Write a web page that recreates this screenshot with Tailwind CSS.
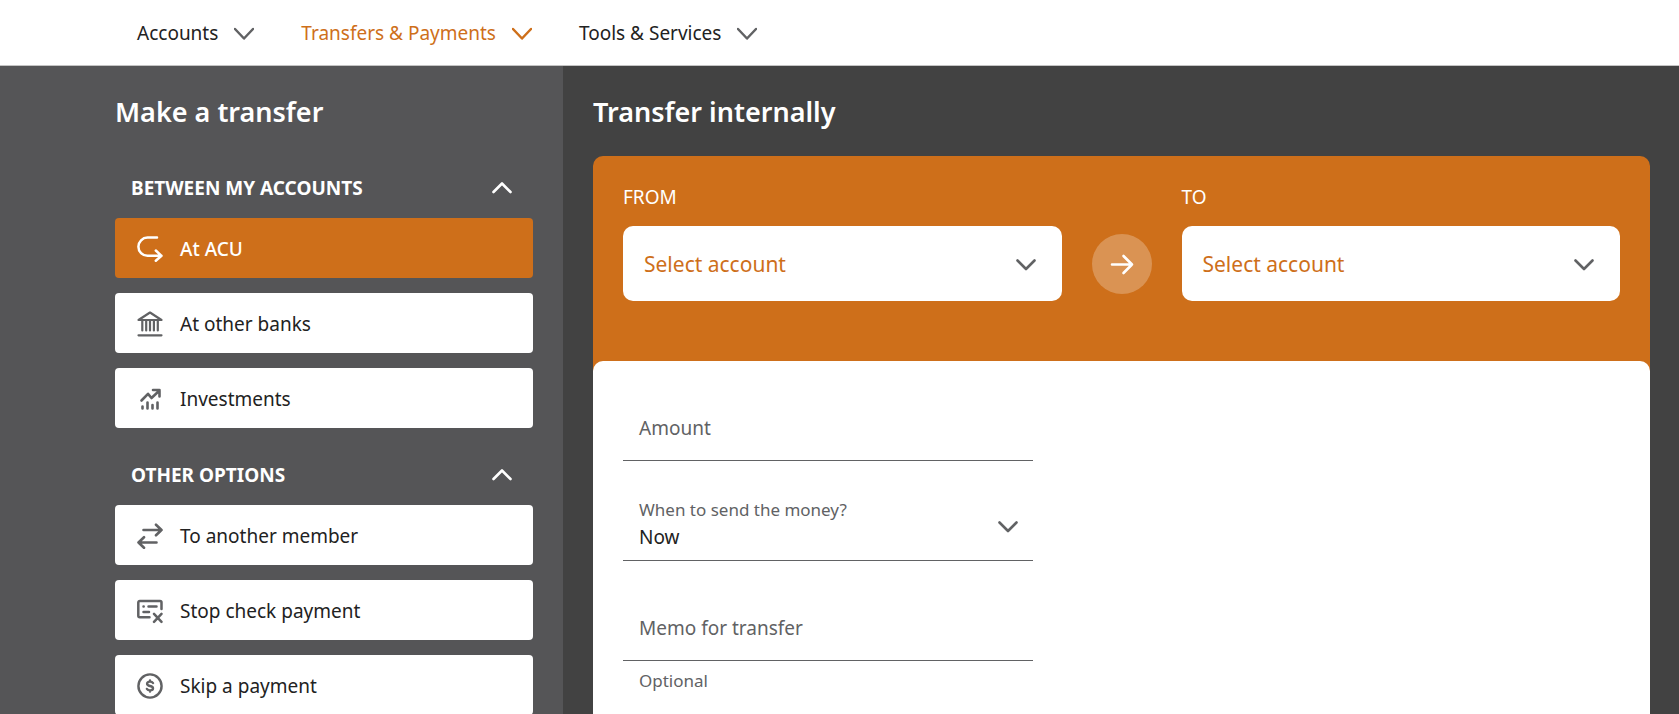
<!DOCTYPE html>
<html lang="en">
<head>
    <meta charset="UTF-8">
    <meta name="viewport" content="width=device-width, initial-scale=1.0">
    <title>Transfer internally</title>
    <script src="https://cdn.jsdelivr.net/npm/@tailwindcss/browser@4"></script>
</head>
<body class="flex h-screen flex-col overflow-hidden bg-[#424242] font-['Noto_Sans',sans-serif] text-[19px] text-[#222222]">
    <!-- Top navigation -->
    <header class="shrink-0 border-b border-[#c4c4c4] bg-white">
        <nav class="flex h-[65px] items-center gap-[47px] pt-0.5 pl-[137px]">
            <button type="button" class="flex items-center gap-4">
                Accounts
                <svg class="h-5 w-5 text-[#616264]" viewBox="0 0 20 20" fill="none" stroke="currentColor" stroke-width="2.5" stroke-linecap="round" stroke-linejoin="round"><path d="M1 5l9 9.500 9-9.500"/></svg>
            </button>
            <button type="button" class="flex items-center gap-4 text-[#ce6f1a]">
                Transfers &amp; Payments
                <svg class="h-5 w-5" viewBox="0 0 20 20" fill="none" stroke="currentColor" stroke-width="2.5" stroke-linecap="round" stroke-linejoin="round"><path d="M1 5l9 9.500 9-9.500"/></svg>
            </button>
            <button type="button" class="flex items-center gap-4">
                Tools &amp; Services
                <svg class="h-5 w-5 text-[#616264]" viewBox="0 0 20 20" fill="none" stroke="currentColor" stroke-width="2.5" stroke-linecap="round" stroke-linejoin="round"><path d="M1 5l9 9.500 9-9.500"/></svg>
            </button>
        </nav>
    </header>

    <div class="flex min-h-0 flex-1">
        <!-- Sidebar -->
        <aside class="w-[563px] shrink-0 overflow-hidden bg-[#555557] pt-[26px] pr-[30px] pl-[115px]">
            <h2 class="mb-[26px] text-[27px] leading-10 font-semibold text-white">Make a transfer</h2>

            <section class="mb-[17px]">
                <button type="button" class="flex h-[60px] w-full items-center justify-between pr-[21px] pl-4 font-bold text-white">
                    BETWEEN MY ACCOUNTS
                    <svg class="h-5 w-5" viewBox="0 0 20 20" fill="none" stroke="currentColor" stroke-width="2.6" stroke-linecap="round" stroke-linejoin="round"><path d="M1.5 14L10 5.5l8.5 8.5"/></svg>
                </button>
                <ul class="flex flex-col gap-[15px]">
                    <li>
                        <a href="#" class="flex h-[60px] items-center gap-[17px] rounded bg-[#ce6f1a] px-[22px] pt-0.5 font-medium text-white">
                            <svg class="h-[26px] w-[26px]" viewBox="0 0 26 26" fill="none" stroke="currentColor" stroke-width="2.5" stroke-linecap="round" stroke-linejoin="round"><path d="M20 1.600H10.500a9.100 9.100 0 0 0 0 18.200H24.500M18.800 14.500l5.700 5.300-5.700 5"/></svg>
                            At ACU
                        </a>
                    </li>
                    <li>
                        <a href="#" class="flex h-[60px] items-center gap-[17px] rounded bg-white px-[22px] pt-0.5">
                            <svg class="h-[26px] w-[26px] text-[#616264]" viewBox="0 0 26 26" fill="none" stroke="currentColor" stroke-width="2.2" stroke-linecap="round" stroke-linejoin="round"><path d="M1.500 9L13 1.500l11.500 7.500zM5.300 10v9.500M9.200 10v9.500M13 10v9.500M16.900 10v9.500M20.800 10v9.500M1.500 24.300h23"/></svg>
                            At other banks
                        </a>
                    </li>
                    <li>
                        <a href="#" class="flex h-[60px] items-center gap-[17px] rounded bg-white px-[22px] pt-0.5">
                            <svg class="h-[26px] w-[26px] text-[#616264]" viewBox="0 0 26 26" fill="none" stroke="currentColor" stroke-width="2.6" stroke-linecap="round" stroke-linejoin="round"><path d="M4.500 14.500l6.500-6.700 3.500 4.200 8-7.500M16 4h6.500v6.500M5.500 20.500v2M10.500 16.500v6M15.500 19v3.500M20.500 16.500v6"/></svg>
                            Investments
                        </a>
                    </li>
                </ul>
            </section>

            <section>
                <button type="button" class="flex h-[60px] w-full items-center justify-between pr-[21px] pl-4 font-bold text-white">
                    OTHER OPTIONS
                    <svg class="h-5 w-5" viewBox="0 0 20 20" fill="none" stroke="currentColor" stroke-width="2.6" stroke-linecap="round" stroke-linejoin="round"><path d="M1.5 14L10 5.5l8.5 8.5"/></svg>
                </button>
                <ul class="flex flex-col gap-[15px]">
                    <li>
                        <a href="#" class="flex h-[60px] items-center gap-[17px] rounded bg-white px-[22px] pt-0.5">
                            <svg class="h-[26px] w-[26px] text-[#616264]" viewBox="0 0 26 26" fill="none" stroke="currentColor" stroke-width="2.600" stroke-linecap="round" stroke-linejoin="round"><path d="M6.500 7H24.500M19 1.700l5.500 5.300-5.500 5.300M19.500 19.500H1.500M7 14.200l-5.500 5.300 5.500 5.300"/></svg>
                            To another member
                        </a>
                    </li>
                    <li>
                        <a href="#" class="flex h-[60px] items-center gap-[17px] rounded bg-white px-[22px] pt-0.5">
                            <svg class="h-[26px] w-[26px] text-[#616264]" viewBox="0 0 26 26" fill="none" stroke="currentColor" stroke-width="2.500" stroke-linecap="round" stroke-linejoin="round"><path d="M12.500 19.300H2.800a1.500 1.500 0 0 1-1.500-1.500V4.500A1.500 1.500 0 0 1 2.800 3H23a1.500 1.500 0 0 1 1.500 1.500V11M6.500 8.500h.2M11.500 8.500h8M6.500 14h5.500M17 15.800l7.500 8M24.500 15.800l-7.500 8"/></svg>
                            Stop check payment
                        </a>
                    </li>
                    <li>
                        <a href="#" class="flex h-[60px] items-center gap-[17px] rounded bg-white px-[22px] pt-0.5">
                            <svg class="h-[26px] w-[26px] text-[#616264]" viewBox="0 0 26 26" fill="none" stroke="currentColor" stroke-width="2.400" stroke-linecap="round" stroke-linejoin="round"><circle cx="13" cy="13" r="11.600"/><path d="M16 10c-.6-1-1.700-1.400-3-1.400-1.700 0-2.900.8-2.900 2.100 0 1.500 1.300 1.900 2.900 2.300s3 .9 3 2.300c0 1.300-1.200 2.100-3 2.100-1.400 0-2.500-.5-3.100-1.500M13 7.500v1M13 17.500v1"/></svg>
                            Skip a payment
                        </a>
                    </li>
                </ul>
            </section>
        </aside>

        <!-- Transfer form -->
        <main class="flex flex-1 flex-col overflow-hidden pt-[26px] pr-[29px] pl-[30px]">
            <h1 class="mb-6 text-[27px] leading-10 font-semibold text-white">Transfer internally</h1>

            <form class="flex flex-1 flex-col rounded-t-[10px] bg-[#ce6f1a]">
                <div class="flex items-end gap-[30px] px-[30px] pt-[25px] pb-[60px]">
                    <div class="flex-1">
                        <label for="from" class="mb-[13px] block leading-8 text-white">FROM</label>
                        <div class="relative">
                            <select id="from" class="h-[75px] w-full appearance-none rounded-[10px] bg-white px-[21px] pt-0.5 text-[21px] text-[#ce6f1a]">
                                <option>Select account</option>
                            </select>
                            <svg class="pointer-events-none absolute top-7 right-[26px] h-5 w-5 text-[#616264]" viewBox="0 0 20 20" fill="none" stroke="currentColor" stroke-width="2.6" stroke-linecap="round" stroke-linejoin="round"><path d="M1.500 6.500l8.500 8.500 8.500-8.500"/></svg>
                        </div>
                    </div>
                    <div class="flex h-[75px] items-center">
                        <div class="flex h-[60px] w-[60px] items-center justify-center rounded-full bg-white/25 text-white">
                            <svg class="h-[26px] w-[26px]" viewBox="0 0 26 26" fill="none" stroke="currentColor" stroke-width="2.600" stroke-linecap="round" stroke-linejoin="round"><path d="M3 13.500h20M14.500 5l8.500 8.500-8.500 8.500"/></svg>
                        </div>
                    </div>
                    <div class="flex-1">
                        <label for="to" class="mb-[13px] block leading-8 text-white">TO</label>
                        <div class="relative">
                            <select id="to" class="h-[75px] w-full appearance-none rounded-[10px] bg-white px-[21px] pt-0.5 text-[21px] text-[#ce6f1a]">
                                <option>Select account</option>
                            </select>
                            <svg class="pointer-events-none absolute top-7 right-[26px] h-5 w-5 text-[#616264]" viewBox="0 0 20 20" fill="none" stroke="currentColor" stroke-width="2.6" stroke-linecap="round" stroke-linejoin="round"><path d="M1.500 6.500l8.500 8.500 8.500-8.500"/></svg>
                        </div>
                    </div>
                </div>

                <div class="flex-1 rounded-t-[10px] bg-white px-[30px] pt-[25px]">
                    <div class="flex w-[410px] flex-col gap-[25px] text-[#616264]">
                        <div class="relative">
                            <label for="amount" class="pointer-events-none absolute top-7 left-4 leading-7">Amount</label>
                            <input type="text" id="amount" class="block h-[75px] w-full border-b border-[#616264] px-4 pt-5 text-[#222222]">
                        </div>
                        <div class="relative">
                            <label for="when" class="pointer-events-none absolute top-3 left-4 text-[17px] leading-6">When to send the money?</label>
                            <select id="when" class="block h-[75px] w-full appearance-none border-b border-[#616264] px-4 pt-7 text-[#222222]">
                                <option>Now</option>
                            </select>
                            <svg class="pointer-events-none absolute top-[30px] right-[15px] h-5 w-5" viewBox="0 0 20 20" fill="none" stroke="currentColor" stroke-width="2.6" stroke-linecap="round" stroke-linejoin="round"><path d="M1.500 6.500l8.500 8.500 8.500-8.500"/></svg>
                        </div>
                        <div class="relative">
                            <label for="memo" class="pointer-events-none absolute top-7 left-4 leading-7">Memo for transfer</label>
                            <input type="text" id="memo" class="block h-[75px] w-full border-b border-[#616264] px-4 pt-5 text-[#222222]">
                            <p class="px-4 pt-2 text-[17px] leading-6">Optional</p>
                        </div>
                    </div>
                </div>
            </form>
        </main>
    </div>
</body>
</html>
